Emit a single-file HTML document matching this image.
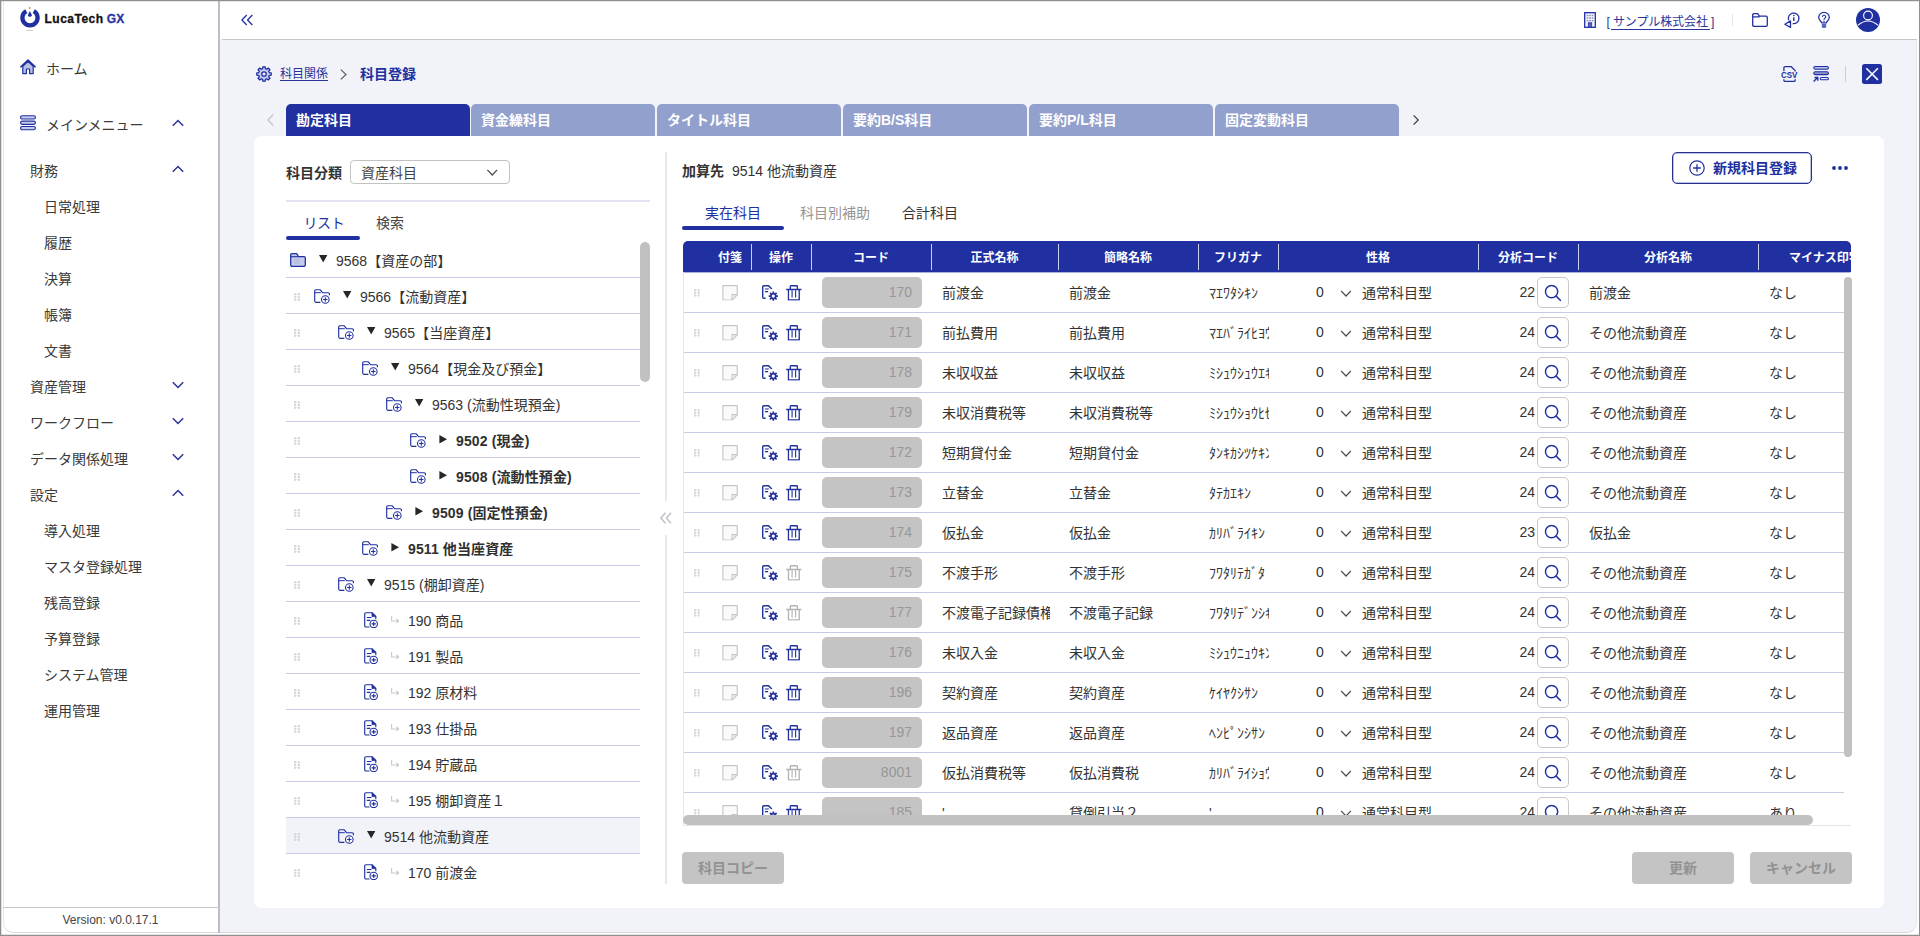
<!DOCTYPE html><html lang="ja"><head><meta charset="utf-8"><title>科目登録</title><style>
*{box-sizing:border-box;margin:0;padding:0}
html,body{width:1920px;height:936px;overflow:hidden}
body{position:relative;background:#fff;font-family:"Liberation Sans","Noto Sans CJK JP",sans-serif;font-size:14px;color:#3a3a3a;line-height:1}
.a{position:absolute}
.t{position:absolute;white-space:nowrap;line-height:20px;height:20px}
svg{position:absolute;overflow:visible}
#app{left:3px;top:1px;width:1914px;height:932px;background:#f2f3f9;border:1px solid #e9e9eb;border-bottom-color:#d9d9db;border-top:none;border-radius:0 0 10px 10px;overflow:hidden}
.tab{position:absolute;top:104px;height:32px;border-radius:5px 5px 0 0;background:#92a0cd;color:#fff;font-weight:bold;font-size:14px;line-height:32px;padding-left:10px;white-space:nowrap}
.tab.on{background:#2030a0}
.trow{position:absolute;left:286px;width:354px;height:36px;border-bottom:1px solid #c6cce6}
.trow.sel{background:#f1f3f9}
.th{position:absolute;top:241px;height:31px;line-height:34px;overflow:hidden;color:#fff;font-weight:bold;font-size:12px;text-align:center;white-space:nowrap}
.vl{position:absolute;top:244px;width:1px;height:26px;background:#c9cfea}
.rl{position:absolute;left:684px;width:1167px;height:1px;background:#c6cce6}
.code{position:absolute;left:822px;width:100px;height:31px;background:#c4c4c4;border-radius:5px;color:#979797;text-align:right;padding-right:10px;line-height:30px;font-size:14px}
.sbtn{position:absolute;left:1537px;width:32px;height:31px;border:1px solid #c8c8c8;border-radius:5px;background:#fff}
.btn{position:absolute;top:852px;height:32px;width:102px;border-radius:4px;background:#c4c4c4;color:#929292;font-weight:bold;font-size:14px;text-align:center;line-height:33px;white-space:nowrap}
.fu{position:absolute;left:1209px;width:60px;overflow:hidden;white-space:nowrap;line-height:20px;height:20px;font-size:14px;color:#333}
</style></head><body>

<svg width="0" height="0" style="position:absolute"><defs>
<symbol id="i-drag" viewBox="0 0 6 8"><g fill="#b6b6be"><rect x=".3" y=".4" width="1.600" height="1.600"/><rect x="4.100" y=".4" width="1.600" height="1.600"/><rect x=".3" y="3.200" width="1.600" height="1.600"/><rect x="4.100" y="3.200" width="1.600" height="1.600"/><rect x=".3" y="6" width="1.600" height="1.600"/><rect x="4.100" y="6" width="1.600" height="1.600"/></g><path d="M1.100 0v8M4.900 0v8M0 1.200h6M0 4h6M0 6.800h6" stroke="#dedee4" stroke-width=".7"/></symbol>
<symbol id="i-folderp" viewBox="0 0 16 15"><path d="M6.400 13.300H1.900A1.200 1.200 0 0 1 .7 12.100V1.900A1.200 1.200 0 0 1 1.900 .7H6l2.600 3h5.600a1.200 1.200 0 0 1 1.200 1.200v1.400" fill="none" stroke="#2030a0" stroke-width="1.150" stroke-linejoin="round"/><path d="M.8 3.700h6" stroke="#2030a0" stroke-width="1" fill="none"/><circle cx="11.300" cy="10.500" r="3.800" fill="#fff" stroke="#2030a0" stroke-width="1.080"/><path d="M11.300 8.300v4.400M9.100 10.500h4.400" stroke="#2030a0" stroke-width="1.080"/></symbol>
<symbol id="i-filep" viewBox="0 0 14 16"><path d="M5.600 15H1.900A1.200 1.200 0 0 1 .7 13.800V1.900A1.200 1.200 0 0 1 1.900 .7H8l3.800 3.800v2.800" fill="none" stroke="#2030a0" stroke-width="1.150" stroke-linejoin="round"/><path d="M8 .8l3.800 3.800H8z" fill="#2030a0" stroke="#2030a0" stroke-width=".8" stroke-linejoin="round"/><path d="M2.800 5.500h4.600M2.800 8.400h3.600" fill="none" stroke="#2030a0" stroke-width="1.150"/><circle cx="9.700" cy="11.900" r="3.700" fill="#fff" stroke="#2030a0" stroke-width="1.080"/><path d="M9.700 9.700v4.400M7.500 11.900h4.400" stroke="#2030a0" stroke-width="1.080"/></symbol>
<symbol id="i-folder" viewBox="0 0 16 14"><path d="M1.900 .7h5l1.600 3h5.600a1.200 1.200 0 0 1 1.200 1.200v7.200a1.200 1.200 0 0 1-1.200 1.200H1.900A1.200 1.200 0 0 1 .7 12.100V1.900A1.200 1.200 0 0 1 1.900 .7z" fill="#c3cbef" stroke="#2030a0" stroke-width="1.300" stroke-linejoin="round"/><path d="M.8 3.700h7.600" stroke="#2030a0" stroke-width="1.100" fill="none"/><rect x="4" y="5.500" width="6" height="5.500" fill="#b4b8cc" opacity=".55"/></symbol>
<symbol id="i-note" viewBox="0 0 16 16"><path d="M.6 .6h14.800v9.300L9.900 15.400H.6z" fill="#fafafa" stroke="#c6c6c6" stroke-width="1.200" stroke-linejoin="round"/><path d="M15.400 9.900H9.900v5.500z" fill="#f1f1f1" stroke="#c6c6c6" stroke-width="1.100" stroke-linejoin="round"/></symbol>
<symbol id="i-fgear" viewBox="0 0 16 16"><path d="M3.600 13.300H2A1.300 1.300 0 0 1 .7 12V2A1.300 1.300 0 0 1 2 .7h4.600L9.900 4" fill="none" stroke="#2030a0" stroke-width="1.400" stroke-linejoin="round"/><path d="M2.900 4h3.900M2.900 6.600h3.200" stroke="#2030a0" stroke-width="1.100" fill="none"/><g transform="translate(11.300 11.100)"><path d="M-0.87 -3.18L-0.84 -4.62L0.84 -4.62L0.87 -3.18L1.64 -2.87L2.67 -3.87L3.87 -2.67L2.87 -1.64L3.18 -0.87L4.62 -0.84L4.62 0.84L3.18 0.87L2.87 1.64L3.87 2.67L2.67 3.87L1.64 2.87L0.87 3.18L0.84 4.62L-0.84 4.62L-0.87 3.18L-1.64 2.87L-2.67 3.87L-3.87 2.67L-2.87 1.64L-3.18 0.87L-4.62 0.84L-4.62 -0.84L-3.18 -0.87L-2.87 -1.64L-3.87 -2.67L-2.67 -3.87L-1.64 -2.87Z" fill="#2030a0"/><circle r="1.650" fill="#fff"/></g></symbol>
<symbol id="i-trash" viewBox="0 0 16 16"><path d="M.2 4.500h15.800" fill="none" stroke-width="1.500"/><path d="M4.400 4.400V1.400a.7.700 0 0 1 .7-.7h5.800a.7.700 0 0 1 .7.700v3M2.500 4.800v10.400h11V4.800" fill="none" stroke-width="1.350"/><path d="M6.200 5.200v7.600M9.800 5.200v7.600" fill="none" stroke-width="1.150"/></symbol>
<symbol id="i-search" viewBox="0 0 18 18"><circle cx="7.800" cy="7.800" r="6.300" fill="none" stroke="#2030a0" stroke-width="1.500"/><path d="M12.400 12.400l4.600 4.600" stroke="#2030a0" stroke-width="1.600" stroke-linecap="round"/></symbol>
<symbol id="i-chev" viewBox="0 0 12 8"><path d="M.8 1l5.200 5.400L11.200 1" fill="none" stroke="#4a4a4a" stroke-width="1.300"/></symbol>
<symbol id="i-up" viewBox="0 0 12 8"><path d="M.8 6.800l5.200-5.300 5.200 5.300" fill="none" stroke="#2a3294" stroke-width="1.500"/></symbol>
<symbol id="i-down" viewBox="0 0 12 8"><path d="M.8 1.200l5.200 5.300 5.200-5.300" fill="none" stroke="#2a3294" stroke-width="1.500"/></symbol>
<symbol id="i-leaf" viewBox="0 0 9 8"><path d="M.6 0v5.300h7.400M5.800 3.200l2.300 2.100-2.300 2.100" fill="none" stroke="#c9c9cd" stroke-width="1.200"/></symbol>
<symbol id="i-dn" viewBox="0 0 9 8"><path d="M0 0h9L4.500 8z" fill="#262626"/></symbol>
<symbol id="i-rt" viewBox="0 0 8 9"><path d="M0 0l8 4.500L0 9z" fill="#262626"/></symbol>
</defs></svg>

<div class="a" id="app"></div>
<div class="a" style="left:4px;top:1px;width:214px;height:931px;background:#fff;border-radius:0 0 0 9px"></div>
<div class="a" style="left:218px;top:1px;width:2px;height:932px;background:#bbbdc8"></div>
<svg style="left:19px;top:5px" width="22" height="28" viewBox="0 0 22 28"><path d="M7.300 6.100A7.600 7.600 0 1 0 14.700 6.100" fill="none" stroke="#2030a0" stroke-width="4.300"/><path d="M10.900 6.100l2.100 4.200a2.200 2.200 0 0 1-4.200 0z" fill="#2030a0"/><circle cx="10.700" cy="2.900" r="1" fill="#d9964a"/><ellipse cx="10.600" cy="25.400" rx="3.600" ry=".6" fill="#cfcfd4"/></svg>
<div class="t" style="left:44.5px;top:8.5px;font-size:12px;font-weight:bold;color:#111;letter-spacing:.5px;-webkit-text-stroke:.3px">LucaTech<span style="color:#2a34a4;margin-left:3px;letter-spacing:.4px">GX</span></div>
<svg style="left:20px;top:59px" width="16" height="15.500" viewBox="0 0 17 16"><path d="M3 7.400v7.800h3.800v-4.800h3.400v4.800H14V7.400L8.500 2.200z" fill="#b9c3e8" stroke="#2030a0" stroke-width="1.300" stroke-linejoin="round"/><path d="M.9 8.100L8.500 1l7.600 7.100" fill="none" stroke="#2030a0" stroke-width="1.600" stroke-linejoin="round" stroke-linecap="round"/></svg>
<div class="t" style="left:46px;top:59px;">ホーム</div>
<svg style="left:20px;top:115px" width="16" height="15.500" viewBox="0 0 17 16"><g fill="#c3cbef" stroke="#2030a0" stroke-width="1.200"><rect x=".6" y=".6" width="15.800" height="3.400" rx="1.700"/><rect x=".6" y="6.300" width="15.800" height="3.400" rx="1.700"/><rect x=".6" y="12" width="15.800" height="3.400" rx="1.700"/></g></svg>
<div class="t" style="left:46px;top:115px;">メインメニュー</div>
<svg style="left:172px;top:119px" width="12" height="8" ><use href="#i-up"/></svg>
<div class="t" style="left:30px;top:160.5px;">財務</div>
<svg style="left:172px;top:165px" width="12" height="8" ><use href="#i-up"/></svg>
<div class="t" style="left:44px;top:196.5px;">日常処理</div>
<div class="t" style="left:44px;top:232.5px;">履歴</div>
<div class="t" style="left:44px;top:268.5px;">決算</div>
<div class="t" style="left:44px;top:304.5px;">帳簿</div>
<div class="t" style="left:44px;top:340.5px;">文書</div>
<div class="t" style="left:30px;top:376.5px;">資産管理</div>
<svg style="left:172px;top:381px" width="12" height="8" ><use href="#i-down"/></svg>
<div class="t" style="left:30px;top:412.5px;">ワークフロー</div>
<svg style="left:172px;top:417px" width="12" height="8" ><use href="#i-down"/></svg>
<div class="t" style="left:30px;top:448.5px;">データ関係処理</div>
<svg style="left:172px;top:453px" width="12" height="8" ><use href="#i-down"/></svg>
<div class="t" style="left:30px;top:484.5px;">設定</div>
<svg style="left:172px;top:489px" width="12" height="8" ><use href="#i-up"/></svg>
<div class="t" style="left:44px;top:520.5px;">導入処理</div>
<div class="t" style="left:44px;top:556.5px;">マスタ登録処理</div>
<div class="t" style="left:44px;top:592.5px;">残高登録</div>
<div class="t" style="left:44px;top:628.5px;">予算登録</div>
<div class="t" style="left:44px;top:664.5px;">システム管理</div>
<div class="t" style="left:44px;top:700.5px;">運用管理</div>
<div class="a" style="left:3px;top:907px;width:215px;height:1px;background:#c9c9c9"></div>
<div class="t" style="left:3px;top:910px;width:215px;text-align:center;font-size:12px;color:#444">Version: v0.0.17.1</div>
<div class="a" style="left:220px;top:1px;width:1697px;height:38px;background:#fff"></div>
<div class="a" style="left:222px;top:39px;width:1695px;height:1px;background:#c7c7c7"></div>
<svg style="left:240.500px;top:14px" width="12.500" height="12" viewBox="0 0 13 12"><path d="M6 .8L1 6l5 5.200M11.800 .8L6.800 6l5 5.200" fill="none" stroke="#2030a0" stroke-width="1.350"/></svg>
<svg style="left:1584px;top:12px" width="12" height="16" viewBox="0 0 12 16"><rect x=".7" y=".7" width="10.600" height="14.600" fill="#f4f5fc" stroke="#2030a0" stroke-width="1.300"/><g fill="#8a8fb0"><rect x="2.700" y="2.800" width="1.600" height="1.400"/><rect x="5.200" y="2.800" width="1.600" height="1.400"/><rect x="7.700" y="2.800" width="1.600" height="1.400"/><rect x="2.700" y="5.400" width="1.600" height="1.400"/><rect x="5.200" y="5.400" width="1.600" height="1.400"/><rect x="7.700" y="5.400" width="1.600" height="1.400"/><rect x="2.700" y="8" width="1.600" height="1.400"/><rect x="5.200" y="8" width="1.600" height="1.400"/><rect x="7.700" y="8" width="1.600" height="1.400"/></g><rect x="4.300" y="10.800" width="3.400" height="4.600" fill="#5b64c2" stroke="#2030a0" stroke-width=".8"/></svg>
<div class="t" style="left:1606.5px;top:11.5px;font-size:12px;color:#2a349c;letter-spacing:-.1px">[&nbsp;サンプル株式会社&nbsp;]</div>
<div class="a" style="left:1611px;top:29px;width:99px;height:1px;background:#2a349c"></div>
<div class="a" style="left:1732px;top:14px;width:1px;height:12px;background:#e4e4e8"></div>
<svg style="left:1752px;top:13px" width="16" height="14" viewBox="0 0 16 14"><path d="M1.900 .7h3.800l1.700 2.500h6.700a1.200 1.200 0 0 1 1.200 1.200v7.700a1.200 1.200 0 0 1-1.200 1.200H1.900A1.200 1.200 0 0 1 .7 12.100V1.900A1.200 1.200 0 0 1 1.900 .7zM.8 3.900h6.800" fill="none" stroke="#2030a0" stroke-width="1.300" stroke-linejoin="round"/></svg>
<svg style="left:1784px;top:12px" width="16" height="16" viewBox="0 0 16 16"><path d="M4.700 8.300A5.300 5.300 0 1 1 8.600 11.600" fill="none" stroke="#2030a0" stroke-width="1.300"/><path d="M9.800 5.300v3.600" stroke="#2030a0" stroke-width="1.400"/><circle cx="9.800" cy="3.500" r=".8" fill="#2030a0"/><path d="M.8 12.200l5.700-3.300v6.500z" fill="#fff" stroke="#2030a0" stroke-width="1.300" stroke-linejoin="round"/></svg>
<svg style="left:1818px;top:12px" width="12" height="16" viewBox="0 0 12 16"><path d="M3.600 10.800C3.600 9.300.7 8.300.7 5.600a5.300 5.300 0 0 1 10.600 0c0 2.700-2.900 3.700-2.900 5.200z" fill="none" stroke="#2030a0" stroke-width="1.300" stroke-linejoin="round"/><path d="M3.800 12.900h4.400" stroke="#2030a0" stroke-width="1.300"/><path d="M4.200 14.100h3.600v.3a1 1 0 0 1-1 1H5.200a1 1 0 0 1-1-1z" fill="#c3cbef" stroke="#2030a0" stroke-width=".9"/><path d="M4.500 4.900a1.600 1.600 0 1 1 2.300 1.400c-.6.400-.8.700-.8 1.500" fill="none" stroke="#2030a0" stroke-width="1.100"/><circle cx="6" cy="9.200" r=".7" fill="#2030a0"/></svg>
<svg style="left:1856px;top:8px" width="24" height="24" viewBox="0 0 24 24"><circle cx="12" cy="12" r="12" fill="#2030a0"/><circle cx="12" cy="7.500" r="4.400" fill="none" stroke="#fff" stroke-width="1.100"/><path d="M1.800 17.400Q12 8.600 22.200 17.400" fill="none" stroke="#fff" stroke-width="1.100"/></svg>
<svg style="left:256px;top:66px" width="16" height="16" viewBox="0 0 16 16"><path d="M6.63 2.67L6.80 0.80L9.20 0.80L9.37 2.67L10.80 3.27L12.24 2.06L13.94 3.76L12.73 5.20L13.33 6.63L15.20 6.80L15.20 9.20L13.33 9.37L12.73 10.80L13.94 12.24L12.24 13.94L10.80 12.73L9.37 13.33L9.20 15.20L6.80 15.20L6.63 13.33L5.20 12.73L3.76 13.94L2.06 12.24L3.27 10.80L2.67 9.37L0.80 9.20L0.80 6.80L2.67 6.63L3.27 5.20L2.06 3.76L3.76 2.06L5.20 3.27Z" fill="#c3cbef" stroke="#2030a0" stroke-width="1.300" stroke-linejoin="round"/><circle cx="8" cy="8" r="2.200" fill="#f2f3f9" stroke="#2030a0" stroke-width="1.300"/></svg>
<div class="t" style="left:280px;top:64px;font-size:12px;color:#2a349c;text-decoration:underline;text-underline-offset:1.500px;text-decoration-thickness:1px">科目関係</div>
<svg style="left:340px;top:69px" width="7" height="11" viewBox="0 0 7 11"><path d="M.8 .6l5.200 4.900L.8 10.400" fill="none" stroke="#666" stroke-width="1.300"/></svg>
<div class="t" style="left:360px;top:64px;font-weight:bold;color:#2030a0">科目登録</div>
<svg style="left:1781px;top:66px" width="16" height="16" viewBox="0 0 16 16"><path d="M2.900 5.200V1.900A1.200 1.200 0 0 1 4.100 .7h6.200l3.900 3.900v.8M2.900 13.200v1a1.200 1.200 0 0 0 1.200 1.200H13a1.200 1.200 0 0 0 1.200-1.200v-1" fill="none" stroke="#2030a0" stroke-width="1.300" stroke-linejoin="round"/><text x="8.100" y="12.400" font-size="8.800" font-weight="bold" fill="#2030a0" text-anchor="middle" font-family="Liberation Sans,sans-serif" textLength="16.400" lengthAdjust="spacingAndGlyphs">CSV</text></svg>
<svg style="left:1813px;top:66px" width="16" height="16" viewBox="0 0 16 16"><g stroke="#2030a0" stroke-width="1.100"><rect x=".8" y=".6" width="14.600" height="2.500" rx="1.250" fill="#eceefa"/><rect x=".8" y="5.700" width="14.600" height="2.900" rx="1.450" fill="#8e96c8"/><rect x="7.300" y="11.500" width="8.100" height="2.300" rx="1.150" fill="#eceefa"/></g><path d="M.6 15.600l4-4M1.500 11.500h3.300v3.300" fill="none" stroke="#2030a0" stroke-width="1.400"/></svg>
<div class="a" style="left:1845px;top:66px;width:1px;height:16px;background:#cbcbd0"></div>
<svg style="left:1862px;top:64px" width="20" height="20" viewBox="0 0 20 20"><rect width="20" height="20" rx="2.500" fill="#2030a0"/><path d="M4.300 4.300l11.600 11.600M15.900 4.300L4.300 15.900" stroke="#fff" stroke-width="1.500"/></svg>
<svg style="left:267px;top:114px" width="7" height="12" viewBox="0 0 7 12"><path d="M6.200 .4L1 6l5.200 5.600" fill="none" stroke="#c9c9cf" stroke-width="1.500"/></svg>
<div class="tab on" style="left:286px;width:184px">勘定科目</div>
<div class="tab" style="left:471px;width:184px">資金繰科目</div>
<div class="tab" style="left:657px;width:184px">タイトル科目</div>
<div class="tab" style="left:843px;width:184px">要約B/S科目</div>
<div class="tab" style="left:1029px;width:184px">要約P/L科目</div>
<div class="tab" style="left:1215px;width:184px">固定変動科目</div>
<svg style="left:1413px;top:115px" width="6" height="10" viewBox="0 0 6 10"><path d="M.6 .4L5.200 5 .6 9.600" fill="none" stroke="#444" stroke-width="1.300"/></svg>
<div class="a" style="left:254px;top:136px;width:1630px;height:772px;background:#fff;border-radius:7px"></div>
<div class="t" style="left:286px;top:162.5px;font-weight:bold;color:#333">科目分類</div>
<div class="a" style="left:350px;top:160px;width:160px;height:24px;border:1px solid #c2c2c2;border-radius:4px"></div>
<div class="t" style="left:361px;top:162.5px;color:#444">資産科目</div>
<svg style="left:485.5px;top:168.5px" width="12.5" height="7.5" ><use href="#i-chev"/></svg>
<div class="a" style="left:286px;top:200px;width:364px;height:2px;background:#e2e5f1"></div>
<div class="t" style="left:303.5px;top:212.5px;color:#2030a0;letter-spacing:-.4px">リスト</div>
<div class="t" style="left:376px;top:212.5px;color:#444">検索</div>
<div class="a" style="left:286px;top:236px;width:74px;height:4px;border-radius:2px;background:#2030a0"></div>
<div class="trow" style="top:242px"></div>
<svg style="left:290px;top:253px" width="16" height="14" ><use href="#i-folder"/></svg>
<svg style="left:318.8px;top:255.4px" width="8.4" height="7.7" ><use href="#i-dn"/></svg>
<div class="t" style="left:336px;top:251px;color:#333">9568【資産の部】</div>
<div class="trow" style="top:278px"></div>
<svg style="left:294px;top:292.5px" width="6" height="8" ><use href="#i-drag"/></svg>
<svg style="left:314px;top:289px" width="16" height="15" ><use href="#i-folderp"/></svg>
<svg style="left:342.8px;top:291.4px" width="8.4" height="7.7" ><use href="#i-dn"/></svg>
<div class="t" style="left:360px;top:287px;color:#333">9566【流動資産】</div>
<div class="trow" style="top:314px"></div>
<svg style="left:294px;top:328.5px" width="6" height="8" ><use href="#i-drag"/></svg>
<svg style="left:338px;top:325px" width="16" height="15" ><use href="#i-folderp"/></svg>
<svg style="left:366.8px;top:327.4px" width="8.4" height="7.7" ><use href="#i-dn"/></svg>
<div class="t" style="left:384px;top:323px;color:#333">9565【当座資産】</div>
<div class="trow" style="top:350px"></div>
<svg style="left:294px;top:364.5px" width="6" height="8" ><use href="#i-drag"/></svg>
<svg style="left:362px;top:361px" width="16" height="15" ><use href="#i-folderp"/></svg>
<svg style="left:390.8px;top:363.4px" width="8.4" height="7.7" ><use href="#i-dn"/></svg>
<div class="t" style="left:408px;top:359px;color:#333">9564【現金及び預金】</div>
<div class="trow" style="top:386px"></div>
<svg style="left:294px;top:400.5px" width="6" height="8" ><use href="#i-drag"/></svg>
<svg style="left:386px;top:397px" width="16" height="15" ><use href="#i-folderp"/></svg>
<svg style="left:414.8px;top:399.4px" width="8.4" height="7.7" ><use href="#i-dn"/></svg>
<div class="t" style="left:432px;top:395px;color:#333">9563 (流動性現預金)</div>
<div class="trow" style="top:422px"></div>
<svg style="left:294px;top:436.5px" width="6" height="8" ><use href="#i-drag"/></svg>
<svg style="left:410px;top:433px" width="16" height="15" ><use href="#i-folderp"/></svg>
<svg style="left:439.1px;top:435px" width="8.4" height="8.6" ><use href="#i-rt"/></svg>
<div class="t" style="left:456px;top:431px;font-weight:bold;color:#303030;letter-spacing:.12px">9502 (現金)</div>
<div class="trow" style="top:458px"></div>
<svg style="left:294px;top:472.5px" width="6" height="8" ><use href="#i-drag"/></svg>
<svg style="left:410px;top:469px" width="16" height="15" ><use href="#i-folderp"/></svg>
<svg style="left:439.1px;top:471px" width="8.4" height="8.6" ><use href="#i-rt"/></svg>
<div class="t" style="left:456px;top:467px;font-weight:bold;color:#303030;letter-spacing:.12px">9508 (流動性預金)</div>
<div class="trow" style="top:494px"></div>
<svg style="left:294px;top:508.5px" width="6" height="8" ><use href="#i-drag"/></svg>
<svg style="left:386px;top:505px" width="16" height="15" ><use href="#i-folderp"/></svg>
<svg style="left:415.1px;top:507px" width="8.4" height="8.6" ><use href="#i-rt"/></svg>
<div class="t" style="left:432px;top:503px;font-weight:bold;color:#303030;letter-spacing:.12px">9509 (固定性預金)</div>
<div class="trow" style="top:530px"></div>
<svg style="left:294px;top:544.5px" width="6" height="8" ><use href="#i-drag"/></svg>
<svg style="left:362px;top:541px" width="16" height="15" ><use href="#i-folderp"/></svg>
<svg style="left:391.1px;top:543px" width="8.4" height="8.6" ><use href="#i-rt"/></svg>
<div class="t" style="left:408px;top:539px;font-weight:bold;color:#303030;letter-spacing:.12px">9511 他当座資産</div>
<div class="trow" style="top:566px"></div>
<svg style="left:294px;top:580.5px" width="6" height="8" ><use href="#i-drag"/></svg>
<svg style="left:338px;top:577px" width="16" height="15" ><use href="#i-folderp"/></svg>
<svg style="left:366.8px;top:579.4px" width="8.4" height="7.7" ><use href="#i-dn"/></svg>
<div class="t" style="left:384px;top:575px;color:#333">9515 (棚卸資産)</div>
<div class="trow" style="top:602px"></div>
<svg style="left:294px;top:616.5px" width="6" height="8" ><use href="#i-drag"/></svg>
<svg style="left:364px;top:612.3px" width="14" height="16" ><use href="#i-filep"/></svg>
<svg style="left:391.3px;top:615.7px" width="8.5" height="7.5" ><use href="#i-leaf"/></svg>
<div class="t" style="left:408px;top:611px;color:#333">190 商品</div>
<div class="trow" style="top:638px"></div>
<svg style="left:294px;top:652.5px" width="6" height="8" ><use href="#i-drag"/></svg>
<svg style="left:364px;top:648.3px" width="14" height="16" ><use href="#i-filep"/></svg>
<svg style="left:391.3px;top:651.7px" width="8.5" height="7.5" ><use href="#i-leaf"/></svg>
<div class="t" style="left:408px;top:647px;color:#333">191 製品</div>
<div class="trow" style="top:674px"></div>
<svg style="left:294px;top:688.5px" width="6" height="8" ><use href="#i-drag"/></svg>
<svg style="left:364px;top:684.3px" width="14" height="16" ><use href="#i-filep"/></svg>
<svg style="left:391.3px;top:687.7px" width="8.5" height="7.5" ><use href="#i-leaf"/></svg>
<div class="t" style="left:408px;top:683px;color:#333">192 原材料</div>
<div class="trow" style="top:710px"></div>
<svg style="left:294px;top:724.5px" width="6" height="8" ><use href="#i-drag"/></svg>
<svg style="left:364px;top:720.3px" width="14" height="16" ><use href="#i-filep"/></svg>
<svg style="left:391.3px;top:723.7px" width="8.5" height="7.5" ><use href="#i-leaf"/></svg>
<div class="t" style="left:408px;top:719px;color:#333">193 仕掛品</div>
<div class="trow" style="top:746px"></div>
<svg style="left:294px;top:760.5px" width="6" height="8" ><use href="#i-drag"/></svg>
<svg style="left:364px;top:756.3px" width="14" height="16" ><use href="#i-filep"/></svg>
<svg style="left:391.3px;top:759.7px" width="8.5" height="7.5" ><use href="#i-leaf"/></svg>
<div class="t" style="left:408px;top:755px;color:#333">194 貯蔵品</div>
<div class="trow" style="top:782px"></div>
<svg style="left:294px;top:796.5px" width="6" height="8" ><use href="#i-drag"/></svg>
<svg style="left:364px;top:792.3px" width="14" height="16" ><use href="#i-filep"/></svg>
<svg style="left:391.3px;top:795.7px" width="8.5" height="7.5" ><use href="#i-leaf"/></svg>
<div class="t" style="left:408px;top:791px;color:#333">195 棚卸資産１</div>
<div class="trow sel" style="top:818px"></div>
<svg style="left:294px;top:832.5px" width="6" height="8" ><use href="#i-drag"/></svg>
<svg style="left:338px;top:829px" width="16" height="15" ><use href="#i-folderp"/></svg>
<svg style="left:366.8px;top:831.4px" width="8.4" height="7.7" ><use href="#i-dn"/></svg>
<div class="t" style="left:384px;top:827px;color:#333">9514 他流動資産</div>
<div class="trow" style="top:854px;border-bottom:none"></div>
<svg style="left:294px;top:868.5px" width="6" height="8" ><use href="#i-drag"/></svg>
<svg style="left:364px;top:864.3px" width="14" height="16" ><use href="#i-filep"/></svg>
<svg style="left:391.3px;top:867.7px" width="8.5" height="7.5" ><use href="#i-leaf"/></svg>
<div class="t" style="left:408px;top:863px;color:#333">170 前渡金</div>
<div class="a" style="left:640px;top:242px;width:10px;height:140px;border-radius:5px;background:#c1c1c1"></div>
<div class="a" style="left:665px;top:152px;width:2px;height:349px;background:#e5e7f1"></div>
<div class="a" style="left:665px;top:535px;width:2px;height:349px;background:#e5e7f1"></div>
<svg style="left:660px;top:512px" width="12" height="12" viewBox="0 0 12 12"><path d="M5.500 .8L.9 6l4.600 5.200M11 .8L6.400 6l4.600 5.200" fill="none" stroke="#c2c2ca" stroke-width="1.600"/></svg>
<div class="t" style="left:682px;top:161px;font-weight:bold;color:#333">加算先</div>
<div class="t" style="left:732px;top:161px;color:#333">9514 他流動資産</div>
<div class="a" style="left:1672px;top:152px;width:140px;height:32px;border:1px solid #27308c;border-radius:5px;box-shadow:inset 0 0 0 .5px #7d84c4"></div>
<svg style="left:1689px;top:160px" width="16" height="16" viewBox="0 0 16 16"><circle cx="8" cy="8" r="7.200" fill="none" stroke="#2030a0" stroke-width="1.200"/><path d="M8 4.200v7.600M4.200 8h7.600" stroke="#2030a0" stroke-width="1.300"/></svg>
<div class="t" style="left:1713px;top:158px;font-weight:bold;color:#2030a0">新規科目登録</div>
<svg style="left:1832px;top:166px" width="16" height="4" viewBox="0 0 16 4"><g fill="#2030a0"><circle cx="2" cy="2" r="1.900"/><circle cx="8" cy="2" r="1.900"/><circle cx="14" cy="2" r="1.900"/></g></svg>
<div class="t" style="left:705px;top:203px;color:#2030a0">実在科目</div>
<div class="t" style="left:800px;top:203px;color:#959595">科目別補助</div>
<div class="t" style="left:902px;top:203px;color:#333">合計科目</div>
<div class="a" style="left:682px;top:226px;width:102px;height:4px;border-radius:2px;background:#2030a0"></div>
<div class="a" style="left:683px;top:250px;width:1168px;height:576px;border:1px solid #e4e6ef;border-top:none"></div>
<div class="a" style="left:683px;top:241px;width:1168px;height:31px;background:#2030a0;border-radius:5px 5px 0 0;border-bottom:0"></div>
<div class="a" style="left:684px;top:272px;width:1166px;height:1px;background:#a9afdc"></div>
<div class="th" style="left:709px;width:42px">付箋</div>
<div class="vl" style="left:751px"></div>
<div class="th" style="left:751px;width:60px">操作</div>
<div class="vl" style="left:811px"></div>
<div class="th" style="left:811px;width:120px">コード</div>
<div class="vl" style="left:931px"></div>
<div class="th" style="left:931px;width:127px">正式名称</div>
<div class="vl" style="left:1058px"></div>
<div class="th" style="left:1058px;width:140px">簡略名称</div>
<div class="vl" style="left:1198px"></div>
<div class="th" style="left:1198px;width:80px">フリガナ</div>
<div class="vl" style="left:1278px"></div>
<div class="th" style="left:1278px;width:200px">性格</div>
<div class="vl" style="left:1478px"></div>
<div class="th" style="left:1478px;width:100px">分析コード</div>
<div class="vl" style="left:1578px"></div>
<div class="th" style="left:1578px;width:180px">分析名称</div>
<div class="vl" style="left:1758px"></div>
<div class="th" style="left:1789px;width:62px;overflow:hidden;text-align:left">マイナス印字</div>
<div class="a" style="left:684px;top:273px;width:1167px;height:542px;overflow:hidden">
<div class="a" style="left:-684px;top:-273px;width:1920px;height:936px">
<div class="rl" style="top:312px"></div>
<svg style="left:693.5px;top:288.7px" width="5.8" height="7.8" ><use href="#i-drag"/></svg>
<svg style="left:722px;top:285.4px" width="16.2" height="15.6" ><use href="#i-note"/></svg>
<svg style="left:762px;top:285px" width="16" height="16" ><use href="#i-fgear"/></svg>
<svg style="left:786.2px;top:285px" width="15.7" height="15.8" stroke="#2030a0"><use href="#i-trash"/></svg>
<div class="code" style="top:277px">170</div>
<div class="t" style="left:942px;top:283px;width:108px;overflow:hidden;color:#333">前渡金</div>
<div class="t" style="left:1069px;top:283px;width:120px;overflow:hidden;color:#333">前渡金</div>
<div class="fu" style="top:283px">ﾏｴﾜﾀｼｷﾝ</div>
<div class="t" style="left:1316px;top:282px;color:#333">0</div>
<svg style="left:1339.8px;top:289.5px" width="12" height="7.5" ><use href="#i-chev"/></svg>
<div class="t" style="left:1362px;top:283px;color:#333">通常科目型</div>
<div class="t" style="left:1478px;top:282px;width:57px;text-align:right;color:#333">22</div>
<div class="sbtn" style="top:277px"></div>
<svg style="left:1543.5px;top:283.5px" width="17.5" height="17.5" ><use href="#i-search"/></svg>
<div class="t" style="left:1589px;top:283px;color:#333">前渡金</div>
<div class="t" style="left:1769px;top:283px;color:#333">なし</div>
<div class="rl" style="top:352px"></div>
<svg style="left:693.5px;top:328.7px" width="5.8" height="7.8" ><use href="#i-drag"/></svg>
<svg style="left:722px;top:325.4px" width="16.2" height="15.6" ><use href="#i-note"/></svg>
<svg style="left:762px;top:325px" width="16" height="16" ><use href="#i-fgear"/></svg>
<svg style="left:786.2px;top:325px" width="15.7" height="15.8" stroke="#2030a0"><use href="#i-trash"/></svg>
<div class="code" style="top:317px">171</div>
<div class="t" style="left:942px;top:323px;width:108px;overflow:hidden;color:#333">前払費用</div>
<div class="t" style="left:1069px;top:323px;width:120px;overflow:hidden;color:#333">前払費用</div>
<div class="fu" style="top:323px">ﾏｴﾊﾞﾗｲﾋﾖｳ</div>
<div class="t" style="left:1316px;top:322px;color:#333">0</div>
<svg style="left:1339.8px;top:329.5px" width="12" height="7.5" ><use href="#i-chev"/></svg>
<div class="t" style="left:1362px;top:323px;color:#333">通常科目型</div>
<div class="t" style="left:1478px;top:322px;width:57px;text-align:right;color:#333">24</div>
<div class="sbtn" style="top:317px"></div>
<svg style="left:1543.5px;top:323.5px" width="17.5" height="17.5" ><use href="#i-search"/></svg>
<div class="t" style="left:1589px;top:323px;color:#333">その他流動資産</div>
<div class="t" style="left:1769px;top:323px;color:#333">なし</div>
<div class="rl" style="top:392px"></div>
<svg style="left:693.5px;top:368.7px" width="5.8" height="7.8" ><use href="#i-drag"/></svg>
<svg style="left:722px;top:365.4px" width="16.2" height="15.6" ><use href="#i-note"/></svg>
<svg style="left:762px;top:365px" width="16" height="16" ><use href="#i-fgear"/></svg>
<svg style="left:786.2px;top:365px" width="15.7" height="15.8" stroke="#2030a0"><use href="#i-trash"/></svg>
<div class="code" style="top:357px">178</div>
<div class="t" style="left:942px;top:363px;width:108px;overflow:hidden;color:#333">未収収益</div>
<div class="t" style="left:1069px;top:363px;width:120px;overflow:hidden;color:#333">未収収益</div>
<div class="fu" style="top:363px">ﾐｼｭｳｼｭｳｴｷ</div>
<div class="t" style="left:1316px;top:362px;color:#333">0</div>
<svg style="left:1339.8px;top:369.5px" width="12" height="7.5" ><use href="#i-chev"/></svg>
<div class="t" style="left:1362px;top:363px;color:#333">通常科目型</div>
<div class="t" style="left:1478px;top:362px;width:57px;text-align:right;color:#333">24</div>
<div class="sbtn" style="top:357px"></div>
<svg style="left:1543.5px;top:363.5px" width="17.5" height="17.5" ><use href="#i-search"/></svg>
<div class="t" style="left:1589px;top:363px;color:#333">その他流動資産</div>
<div class="t" style="left:1769px;top:363px;color:#333">なし</div>
<div class="rl" style="top:432px"></div>
<svg style="left:693.5px;top:408.7px" width="5.8" height="7.8" ><use href="#i-drag"/></svg>
<svg style="left:722px;top:405.4px" width="16.2" height="15.6" ><use href="#i-note"/></svg>
<svg style="left:762px;top:405px" width="16" height="16" ><use href="#i-fgear"/></svg>
<svg style="left:786.2px;top:405px" width="15.7" height="15.8" stroke="#2030a0"><use href="#i-trash"/></svg>
<div class="code" style="top:397px">179</div>
<div class="t" style="left:942px;top:403px;width:108px;overflow:hidden;color:#333">未収消費税等</div>
<div class="t" style="left:1069px;top:403px;width:120px;overflow:hidden;color:#333">未収消費税等</div>
<div class="fu" style="top:403px">ﾐｼｭｳｼｮｳﾋｾﾞｲﾄｳ</div>
<div class="t" style="left:1316px;top:402px;color:#333">0</div>
<svg style="left:1339.8px;top:409.5px" width="12" height="7.5" ><use href="#i-chev"/></svg>
<div class="t" style="left:1362px;top:403px;color:#333">通常科目型</div>
<div class="t" style="left:1478px;top:402px;width:57px;text-align:right;color:#333">24</div>
<div class="sbtn" style="top:397px"></div>
<svg style="left:1543.5px;top:403.5px" width="17.5" height="17.5" ><use href="#i-search"/></svg>
<div class="t" style="left:1589px;top:403px;color:#333">その他流動資産</div>
<div class="t" style="left:1769px;top:403px;color:#333">なし</div>
<div class="rl" style="top:472px"></div>
<svg style="left:693.5px;top:448.7px" width="5.8" height="7.8" ><use href="#i-drag"/></svg>
<svg style="left:722px;top:445.4px" width="16.2" height="15.6" ><use href="#i-note"/></svg>
<svg style="left:762px;top:445px" width="16" height="16" ><use href="#i-fgear"/></svg>
<svg style="left:786.2px;top:445px" width="15.7" height="15.8" stroke="#2030a0"><use href="#i-trash"/></svg>
<div class="code" style="top:437px">172</div>
<div class="t" style="left:942px;top:443px;width:108px;overflow:hidden;color:#333">短期貸付金</div>
<div class="t" style="left:1069px;top:443px;width:120px;overflow:hidden;color:#333">短期貸付金</div>
<div class="fu" style="top:443px">ﾀﾝｷｶｼﾂｹｷﾝ</div>
<div class="t" style="left:1316px;top:442px;color:#333">0</div>
<svg style="left:1339.8px;top:449.5px" width="12" height="7.5" ><use href="#i-chev"/></svg>
<div class="t" style="left:1362px;top:443px;color:#333">通常科目型</div>
<div class="t" style="left:1478px;top:442px;width:57px;text-align:right;color:#333">24</div>
<div class="sbtn" style="top:437px"></div>
<svg style="left:1543.5px;top:443.5px" width="17.5" height="17.5" ><use href="#i-search"/></svg>
<div class="t" style="left:1589px;top:443px;color:#333">その他流動資産</div>
<div class="t" style="left:1769px;top:443px;color:#333">なし</div>
<div class="rl" style="top:512px"></div>
<svg style="left:693.5px;top:488.7px" width="5.8" height="7.8" ><use href="#i-drag"/></svg>
<svg style="left:722px;top:485.4px" width="16.2" height="15.6" ><use href="#i-note"/></svg>
<svg style="left:762px;top:485px" width="16" height="16" ><use href="#i-fgear"/></svg>
<svg style="left:786.2px;top:485px" width="15.7" height="15.8" stroke="#2030a0"><use href="#i-trash"/></svg>
<div class="code" style="top:477px">173</div>
<div class="t" style="left:942px;top:483px;width:108px;overflow:hidden;color:#333">立替金</div>
<div class="t" style="left:1069px;top:483px;width:120px;overflow:hidden;color:#333">立替金</div>
<div class="fu" style="top:483px">ﾀﾃｶｴｷﾝ</div>
<div class="t" style="left:1316px;top:482px;color:#333">0</div>
<svg style="left:1339.8px;top:489.5px" width="12" height="7.5" ><use href="#i-chev"/></svg>
<div class="t" style="left:1362px;top:483px;color:#333">通常科目型</div>
<div class="t" style="left:1478px;top:482px;width:57px;text-align:right;color:#333">24</div>
<div class="sbtn" style="top:477px"></div>
<svg style="left:1543.5px;top:483.5px" width="17.5" height="17.5" ><use href="#i-search"/></svg>
<div class="t" style="left:1589px;top:483px;color:#333">その他流動資産</div>
<div class="t" style="left:1769px;top:483px;color:#333">なし</div>
<div class="rl" style="top:552px"></div>
<svg style="left:693.5px;top:528.7px" width="5.8" height="7.8" ><use href="#i-drag"/></svg>
<svg style="left:722px;top:525.4px" width="16.2" height="15.6" ><use href="#i-note"/></svg>
<svg style="left:762px;top:525px" width="16" height="16" ><use href="#i-fgear"/></svg>
<svg style="left:786.2px;top:525px" width="15.7" height="15.8" stroke="#2030a0"><use href="#i-trash"/></svg>
<div class="code" style="top:517px">174</div>
<div class="t" style="left:942px;top:523px;width:108px;overflow:hidden;color:#333">仮払金</div>
<div class="t" style="left:1069px;top:523px;width:120px;overflow:hidden;color:#333">仮払金</div>
<div class="fu" style="top:523px">ｶﾘﾊﾞﾗｲｷﾝ</div>
<div class="t" style="left:1316px;top:522px;color:#333">0</div>
<svg style="left:1339.8px;top:529.5px" width="12" height="7.5" ><use href="#i-chev"/></svg>
<div class="t" style="left:1362px;top:523px;color:#333">通常科目型</div>
<div class="t" style="left:1478px;top:522px;width:57px;text-align:right;color:#333">23</div>
<div class="sbtn" style="top:517px"></div>
<svg style="left:1543.5px;top:523.5px" width="17.5" height="17.5" ><use href="#i-search"/></svg>
<div class="t" style="left:1589px;top:523px;color:#333">仮払金</div>
<div class="t" style="left:1769px;top:523px;color:#333">なし</div>
<div class="rl" style="top:592px"></div>
<svg style="left:693.5px;top:568.7px" width="5.8" height="7.8" ><use href="#i-drag"/></svg>
<svg style="left:722px;top:565.4px" width="16.2" height="15.6" ><use href="#i-note"/></svg>
<svg style="left:762px;top:565px" width="16" height="16" ><use href="#i-fgear"/></svg>
<svg style="left:786.2px;top:565px" width="15.7" height="15.8" stroke="#b3b3b3"><use href="#i-trash"/></svg>
<div class="code" style="top:557px">175</div>
<div class="t" style="left:942px;top:563px;width:108px;overflow:hidden;color:#333">不渡手形</div>
<div class="t" style="left:1069px;top:563px;width:120px;overflow:hidden;color:#333">不渡手形</div>
<div class="fu" style="top:563px">ﾌﾜﾀﾘﾃｶﾞﾀ</div>
<div class="t" style="left:1316px;top:562px;color:#333">0</div>
<svg style="left:1339.8px;top:569.5px" width="12" height="7.5" ><use href="#i-chev"/></svg>
<div class="t" style="left:1362px;top:563px;color:#333">通常科目型</div>
<div class="t" style="left:1478px;top:562px;width:57px;text-align:right;color:#333">24</div>
<div class="sbtn" style="top:557px"></div>
<svg style="left:1543.5px;top:563.5px" width="17.5" height="17.5" ><use href="#i-search"/></svg>
<div class="t" style="left:1589px;top:563px;color:#333">その他流動資産</div>
<div class="t" style="left:1769px;top:563px;color:#333">なし</div>
<div class="rl" style="top:632px"></div>
<svg style="left:693.5px;top:608.7px" width="5.8" height="7.8" ><use href="#i-drag"/></svg>
<svg style="left:722px;top:605.4px" width="16.2" height="15.6" ><use href="#i-note"/></svg>
<svg style="left:762px;top:605px" width="16" height="16" ><use href="#i-fgear"/></svg>
<svg style="left:786.2px;top:605px" width="15.7" height="15.8" stroke="#b3b3b3"><use href="#i-trash"/></svg>
<div class="code" style="top:597px">177</div>
<div class="t" style="left:942px;top:603px;width:108px;overflow:hidden;color:#333">不渡電子記録債権</div>
<div class="t" style="left:1069px;top:603px;width:120px;overflow:hidden;color:#333">不渡電子記録</div>
<div class="fu" style="top:603px">ﾌﾜﾀﾘﾃﾞﾝｼｷﾛｸｻｲｹﾝ</div>
<div class="t" style="left:1316px;top:602px;color:#333">0</div>
<svg style="left:1339.8px;top:609.5px" width="12" height="7.5" ><use href="#i-chev"/></svg>
<div class="t" style="left:1362px;top:603px;color:#333">通常科目型</div>
<div class="t" style="left:1478px;top:602px;width:57px;text-align:right;color:#333">24</div>
<div class="sbtn" style="top:597px"></div>
<svg style="left:1543.5px;top:603.5px" width="17.5" height="17.5" ><use href="#i-search"/></svg>
<div class="t" style="left:1589px;top:603px;color:#333">その他流動資産</div>
<div class="t" style="left:1769px;top:603px;color:#333">なし</div>
<div class="rl" style="top:672px"></div>
<svg style="left:693.5px;top:648.7px" width="5.8" height="7.8" ><use href="#i-drag"/></svg>
<svg style="left:722px;top:645.4px" width="16.2" height="15.6" ><use href="#i-note"/></svg>
<svg style="left:762px;top:645px" width="16" height="16" ><use href="#i-fgear"/></svg>
<svg style="left:786.2px;top:645px" width="15.7" height="15.8" stroke="#2030a0"><use href="#i-trash"/></svg>
<div class="code" style="top:637px">176</div>
<div class="t" style="left:942px;top:643px;width:108px;overflow:hidden;color:#333">未収入金</div>
<div class="t" style="left:1069px;top:643px;width:120px;overflow:hidden;color:#333">未収入金</div>
<div class="fu" style="top:643px">ﾐｼｭｳﾆｭｳｷﾝ</div>
<div class="t" style="left:1316px;top:642px;color:#333">0</div>
<svg style="left:1339.8px;top:649.5px" width="12" height="7.5" ><use href="#i-chev"/></svg>
<div class="t" style="left:1362px;top:643px;color:#333">通常科目型</div>
<div class="t" style="left:1478px;top:642px;width:57px;text-align:right;color:#333">24</div>
<div class="sbtn" style="top:637px"></div>
<svg style="left:1543.5px;top:643.5px" width="17.5" height="17.5" ><use href="#i-search"/></svg>
<div class="t" style="left:1589px;top:643px;color:#333">その他流動資産</div>
<div class="t" style="left:1769px;top:643px;color:#333">なし</div>
<div class="rl" style="top:712px"></div>
<svg style="left:693.5px;top:688.7px" width="5.8" height="7.8" ><use href="#i-drag"/></svg>
<svg style="left:722px;top:685.4px" width="16.2" height="15.6" ><use href="#i-note"/></svg>
<svg style="left:762px;top:685px" width="16" height="16" ><use href="#i-fgear"/></svg>
<svg style="left:786.2px;top:685px" width="15.7" height="15.8" stroke="#2030a0"><use href="#i-trash"/></svg>
<div class="code" style="top:677px">196</div>
<div class="t" style="left:942px;top:683px;width:108px;overflow:hidden;color:#333">契約資産</div>
<div class="t" style="left:1069px;top:683px;width:120px;overflow:hidden;color:#333">契約資産</div>
<div class="fu" style="top:683px">ｹｲﾔｸｼｻﾝ</div>
<div class="t" style="left:1316px;top:682px;color:#333">0</div>
<svg style="left:1339.8px;top:689.5px" width="12" height="7.5" ><use href="#i-chev"/></svg>
<div class="t" style="left:1362px;top:683px;color:#333">通常科目型</div>
<div class="t" style="left:1478px;top:682px;width:57px;text-align:right;color:#333">24</div>
<div class="sbtn" style="top:677px"></div>
<svg style="left:1543.5px;top:683.5px" width="17.5" height="17.5" ><use href="#i-search"/></svg>
<div class="t" style="left:1589px;top:683px;color:#333">その他流動資産</div>
<div class="t" style="left:1769px;top:683px;color:#333">なし</div>
<div class="rl" style="top:752px"></div>
<svg style="left:693.5px;top:728.7px" width="5.8" height="7.8" ><use href="#i-drag"/></svg>
<svg style="left:722px;top:725.4px" width="16.2" height="15.6" ><use href="#i-note"/></svg>
<svg style="left:762px;top:725px" width="16" height="16" ><use href="#i-fgear"/></svg>
<svg style="left:786.2px;top:725px" width="15.7" height="15.8" stroke="#2030a0"><use href="#i-trash"/></svg>
<div class="code" style="top:717px">197</div>
<div class="t" style="left:942px;top:723px;width:108px;overflow:hidden;color:#333">返品資産</div>
<div class="t" style="left:1069px;top:723px;width:120px;overflow:hidden;color:#333">返品資産</div>
<div class="fu" style="top:723px">ﾍﾝﾋﾟﾝｼｻﾝ</div>
<div class="t" style="left:1316px;top:722px;color:#333">0</div>
<svg style="left:1339.8px;top:729.5px" width="12" height="7.5" ><use href="#i-chev"/></svg>
<div class="t" style="left:1362px;top:723px;color:#333">通常科目型</div>
<div class="t" style="left:1478px;top:722px;width:57px;text-align:right;color:#333">24</div>
<div class="sbtn" style="top:717px"></div>
<svg style="left:1543.5px;top:723.5px" width="17.5" height="17.5" ><use href="#i-search"/></svg>
<div class="t" style="left:1589px;top:723px;color:#333">その他流動資産</div>
<div class="t" style="left:1769px;top:723px;color:#333">なし</div>
<div class="rl" style="top:792px"></div>
<svg style="left:693.5px;top:768.7px" width="5.8" height="7.8" ><use href="#i-drag"/></svg>
<svg style="left:722px;top:765.4px" width="16.2" height="15.6" ><use href="#i-note"/></svg>
<svg style="left:762px;top:765px" width="16" height="16" ><use href="#i-fgear"/></svg>
<svg style="left:786.2px;top:765px" width="15.7" height="15.8" stroke="#b3b3b3"><use href="#i-trash"/></svg>
<div class="code" style="top:757px">8001</div>
<div class="t" style="left:942px;top:763px;width:108px;overflow:hidden;color:#333">仮払消費税等</div>
<div class="t" style="left:1069px;top:763px;width:120px;overflow:hidden;color:#333">仮払消費税</div>
<div class="fu" style="top:763px">ｶﾘﾊﾞﾗｲｼｮｳﾋｾﾞｲﾄｳ</div>
<div class="t" style="left:1316px;top:762px;color:#333">0</div>
<svg style="left:1339.8px;top:769.5px" width="12" height="7.5" ><use href="#i-chev"/></svg>
<div class="t" style="left:1362px;top:763px;color:#333">通常科目型</div>
<div class="t" style="left:1478px;top:762px;width:57px;text-align:right;color:#333">24</div>
<div class="sbtn" style="top:757px"></div>
<svg style="left:1543.5px;top:763.5px" width="17.5" height="17.5" ><use href="#i-search"/></svg>
<div class="t" style="left:1589px;top:763px;color:#333">その他流動資産</div>
<div class="t" style="left:1769px;top:763px;color:#333">なし</div>
<svg style="left:693.5px;top:808.7px" width="5.8" height="7.8" ><use href="#i-drag"/></svg>
<svg style="left:722px;top:805.4px" width="16.2" height="15.6" ><use href="#i-note"/></svg>
<svg style="left:762px;top:805px" width="16" height="16" ><use href="#i-fgear"/></svg>
<svg style="left:786.2px;top:805px" width="15.7" height="15.8" stroke="#2030a0"><use href="#i-trash"/></svg>
<div class="code" style="top:797px">185</div>
<div class="t" style="left:942px;top:803px;width:108px;overflow:hidden;color:#333">'</div>
<div class="t" style="left:1069px;top:803px;width:120px;overflow:hidden;color:#333">貸倒引当２</div>
<div class="fu" style="top:803px">'</div>
<div class="t" style="left:1316px;top:802px;color:#333">0</div>
<svg style="left:1339.8px;top:809.5px" width="12" height="7.5" ><use href="#i-chev"/></svg>
<div class="t" style="left:1362px;top:803px;color:#333">通常科目型</div>
<div class="t" style="left:1478px;top:802px;width:57px;text-align:right;color:#333">24</div>
<div class="sbtn" style="top:797px"></div>
<svg style="left:1543.5px;top:803.5px" width="17.5" height="17.5" ><use href="#i-search"/></svg>
<div class="t" style="left:1589px;top:803px;color:#333">その他流動資産</div>
<div class="t" style="left:1769px;top:803px;color:#333">あり</div>
</div></div>
<div class="a" style="left:684px;top:815px;width:1167px;height:10px;background:#fff"></div>
<div class="a" style="left:683px;top:815px;width:1130px;height:10px;border-radius:5px;background:#c1c1c1"></div>
<div class="a" style="left:1844px;top:273px;width:8px;height:542px;background:#fff"></div>
<div class="a" style="left:1844px;top:277px;width:8px;height:480px;border-radius:4px;background:#c1c1c1"></div>
<div class="btn" style="left:682px">科目コピー</div>
<div class="btn" style="left:1632px">更新</div>
<div class="btn" style="left:1750px">キャンセル</div>
<div class="a" style="left:0;top:1px;width:1920px;height:1px;background:rgba(120,120,120,.18)"></div>
<div class="a" style="left:1px;top:0;width:1px;height:936px;background:rgba(120,120,120,.22)"></div>
<div class="a" style="left:0;top:934px;width:1920px;height:1px;background:rgba(120,120,120,.2)"></div>
<div class="a" style="left:0;top:0;width:1920px;height:1px;background:#8f8f8f"></div>
<div class="a" style="left:0;top:935px;width:1920px;height:1px;background:#8f8f8f"></div>
<div class="a" style="left:0;top:0;width:1px;height:936px;background:#8f8f8f"></div>
<div class="a" style="left:1919px;top:0;width:1px;height:936px;background:#8f8f8f"></div>
</body></html>
